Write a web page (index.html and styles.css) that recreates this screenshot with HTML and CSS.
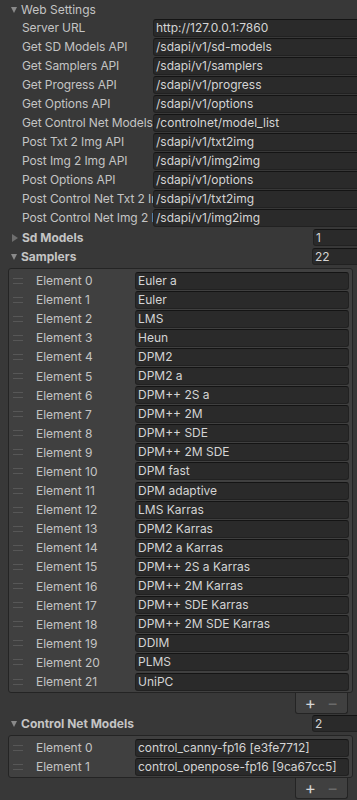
FILE: index.html
```html
<!DOCTYPE html>
<html lang="en">
<head>
    <meta charset="UTF-8">
    <meta name="viewport" content="width=device-width, initial-scale=1.0">
    <title>Inspector</title>
    <link rel="stylesheet" href="styles.css">
</head>
<body>
    <div class="inspector">
        <div class="foldout">
            <span class="arrow down"></span>
            <span class="fold-label">Web Settings</span>
        </div>

        <div class="prop"><span class="prop-label">Server URL</span><span class="field">http://127.0.0.1:7860</span></div>
        <div class="prop"><span class="prop-label">Get SD Models API</span><span class="field">/sdapi/v1/sd-models</span></div>
        <div class="prop"><span class="prop-label">Get Samplers API</span><span class="field">/sdapi/v1/samplers</span></div>
        <div class="prop"><span class="prop-label">Get Progress API</span><span class="field">/sdapi/v1/progress</span></div>
        <div class="prop"><span class="prop-label">Get Options API</span><span class="field">/sdapi/v1/options</span></div>
        <div class="prop"><span class="prop-label">Get Control Net Models</span><span class="field">/controlnet/model_list</span></div>
        <div class="prop"><span class="prop-label">Post Txt 2 Img API</span><span class="field">/sdapi/v1/txt2img</span></div>
        <div class="prop"><span class="prop-label">Post Img 2 Img API</span><span class="field">/sdapi/v1/img2img</span></div>
        <div class="prop"><span class="prop-label">Post Options API</span><span class="field">/sdapi/v1/options</span></div>
        <div class="prop"><span class="prop-label">Post Control Net Txt 2 Img API</span><span class="field">/sdapi/v1/txt2img</span></div>
        <div class="prop"><span class="prop-label">Post Control Net Img 2 Img API</span><span class="field">/sdapi/v1/img2img</span></div>

        <!-- listas -->
        <div class="foldout bold">
            <span class="arrow right"></span>
            <span class="fold-label">Sd Models</span>
            <span class="field size">1</span>
        </div>

        <div class="foldout bold">
            <span class="arrow down"></span>
            <span class="fold-label">Samplers</span>
            <span class="field size">22</span>
        </div>

        <div class="list-wrap">
            <div class="list">
                <div class="item"><span class="handle"></span><span class="item-label">Element 0</span><span class="field">Euler a</span></div>
                <div class="item"><span class="handle"></span><span class="item-label">Element 1</span><span class="field">Euler</span></div>
                <div class="item"><span class="handle"></span><span class="item-label">Element 2</span><span class="field">LMS</span></div>
                <div class="item"><span class="handle"></span><span class="item-label">Element 3</span><span class="field">Heun</span></div>
                <div class="item"><span class="handle"></span><span class="item-label">Element 4</span><span class="field">DPM2</span></div>
                <div class="item"><span class="handle"></span><span class="item-label">Element 5</span><span class="field">DPM2 a</span></div>
                <div class="item"><span class="handle"></span><span class="item-label">Element 6</span><span class="field">DPM++ 2S a</span></div>
                <div class="item"><span class="handle"></span><span class="item-label">Element 7</span><span class="field">DPM++ 2M</span></div>
                <div class="item"><span class="handle"></span><span class="item-label">Element 8</span><span class="field">DPM++ SDE</span></div>
                <div class="item"><span class="handle"></span><span class="item-label">Element 9</span><span class="field">DPM++ 2M SDE</span></div>
                <div class="item"><span class="handle"></span><span class="item-label">Element 10</span><span class="field">DPM fast</span></div>
                <div class="item"><span class="handle"></span><span class="item-label">Element 11</span><span class="field">DPM adaptive</span></div>
                <div class="item"><span class="handle"></span><span class="item-label">Element 12</span><span class="field">LMS Karras</span></div>
                <div class="item"><span class="handle"></span><span class="item-label">Element 13</span><span class="field">DPM2 Karras</span></div>
                <div class="item"><span class="handle"></span><span class="item-label">Element 14</span><span class="field">DPM2 a Karras</span></div>
                <div class="item"><span class="handle"></span><span class="item-label">Element 15</span><span class="field">DPM++ 2S a Karras</span></div>
                <div class="item"><span class="handle"></span><span class="item-label">Element 16</span><span class="field">DPM++ 2M Karras</span></div>
                <div class="item"><span class="handle"></span><span class="item-label">Element 17</span><span class="field">DPM++ SDE Karras</span></div>
                <div class="item"><span class="handle"></span><span class="item-label">Element 18</span><span class="field">DPM++ 2M SDE Karras</span></div>
                <div class="item"><span class="handle"></span><span class="item-label">Element 19</span><span class="field">DDIM</span></div>
                <div class="item"><span class="handle"></span><span class="item-label">Element 20</span><span class="field">PLMS</span></div>
                <div class="item"><span class="handle"></span><span class="item-label">Element 21</span><span class="field">UniPC</span></div>
            </div>
            <div class="list-footer"><span class="btn">+</span><span class="btn dim">&minus;</span></div>
        </div>

        <div class="foldout bold">
            <span class="arrow down"></span>
            <span class="fold-label">Control Net Models</span>
            <span class="field size">2</span>
        </div>

        <div class="list-wrap">
            <div class="list">
                <div class="item"><span class="handle"></span><span class="item-label">Element 0</span><span class="field">control_canny-fp16 [e3fe7712]</span></div>
                <div class="item"><span class="handle"></span><span class="item-label">Element 1</span><span class="field">control_openpose-fp16 [9ca67cc5]</span></div>
            </div>
            <div class="list-footer"><span class="btn">+</span><span class="btn dim">&minus;</span></div>
        </div>
    </div>
</body>
</html>
```

FILE: styles.css
```css
body {
    margin: 0;
    padding: 0;
    background-color: #383838;
    color: #c4c4c4;
    font-family: Inter, "Noto Sans", sans-serif;
    font-size: 12px;
    overflow: hidden;
}

.inspector {
    width: 380px;
}

/* cabecalhos dobraveis */
.foldout {
    display: flex;
    align-items: center;
    height: 19px;
    padding-left: 11px;
}

.foldout.bold {
    font-weight: bold;
}

.arrow {
    width: 0;
    height: 0;
    margin-right: 4px;
}

.arrow.down {
    border-left: 3.5px solid transparent;
    border-right: 3.5px solid transparent;
    border-top: 6px solid #8a8a8a;
}

.arrow.right {
    border-top: 4px solid transparent;
    border-bottom: 4px solid transparent;
    border-left: 6px solid #6e6e6e;
    margin-left: 1px;
}

.foldout .fold-label {
    width: 291px;
    white-space: nowrap;
}

.prop {
    display: flex;
    align-items: flex-start;
    height: 19px;
    padding-left: 22px;
}

.prop-label {
    width: 131px;
    line-height: 18px;
    letter-spacing: -0.1px;
    white-space: nowrap;
    overflow: hidden;
}

.field {
    flex: 1;
    height: 18px;
    box-sizing: border-box;
    line-height: 16px;
    padding-left: 2px;
    background-color: #2a2a2a;
    border: 1px solid #212121;
    border-top-color: #141414;
    border-radius: 3px;
    color: #d4d4d4;
    font-weight: normal;
    white-space: nowrap;
    overflow: hidden;
}

.field.size {
    flex: none;
    width: 60px;
    height: 17px;
    line-height: 15px;
}

/* listas ordenaveis */
.list-wrap {
    width: 345px;
    margin-left: 8px;
    display: flex;
    flex-direction: column;
}

.list {
    margin-top: 2px;
    padding: 2px 0 1px 0;
    background-color: #404040;
    border: 1px solid #242424;
    border-radius: 3px;
}

.item {
    display: flex;
    align-items: center;
    height: 19.1px;
    padding-left: 4px;
}

.handle {
    width: 10px;
    height: 4px;
    border-top: 1px solid #575757;
    border-bottom: 1px solid #575757;
    margin-right: 13px;
}

.item-label {
    width: 99px;
    white-space: nowrap;
}

.item .field {
    flex: none;
    width: 214px;
}

.list-footer {
    align-self: flex-end;
    margin-right: 5px;
    width: 53px;
    height: 21px;
    display: flex;
    justify-content: center;
    gap: 11px;
    align-items: center;
    background-color: #404040;
    border: 1px solid #242424;
    border-top: none;
    border-radius: 0 0 3px 3px;
    box-sizing: border-box;
}

.btn {
    font-size: 17px;
    color: #d6d6d6;
    line-height: 16px;
}

.btn.dim {
    color: #6a6a6a;
}
```
